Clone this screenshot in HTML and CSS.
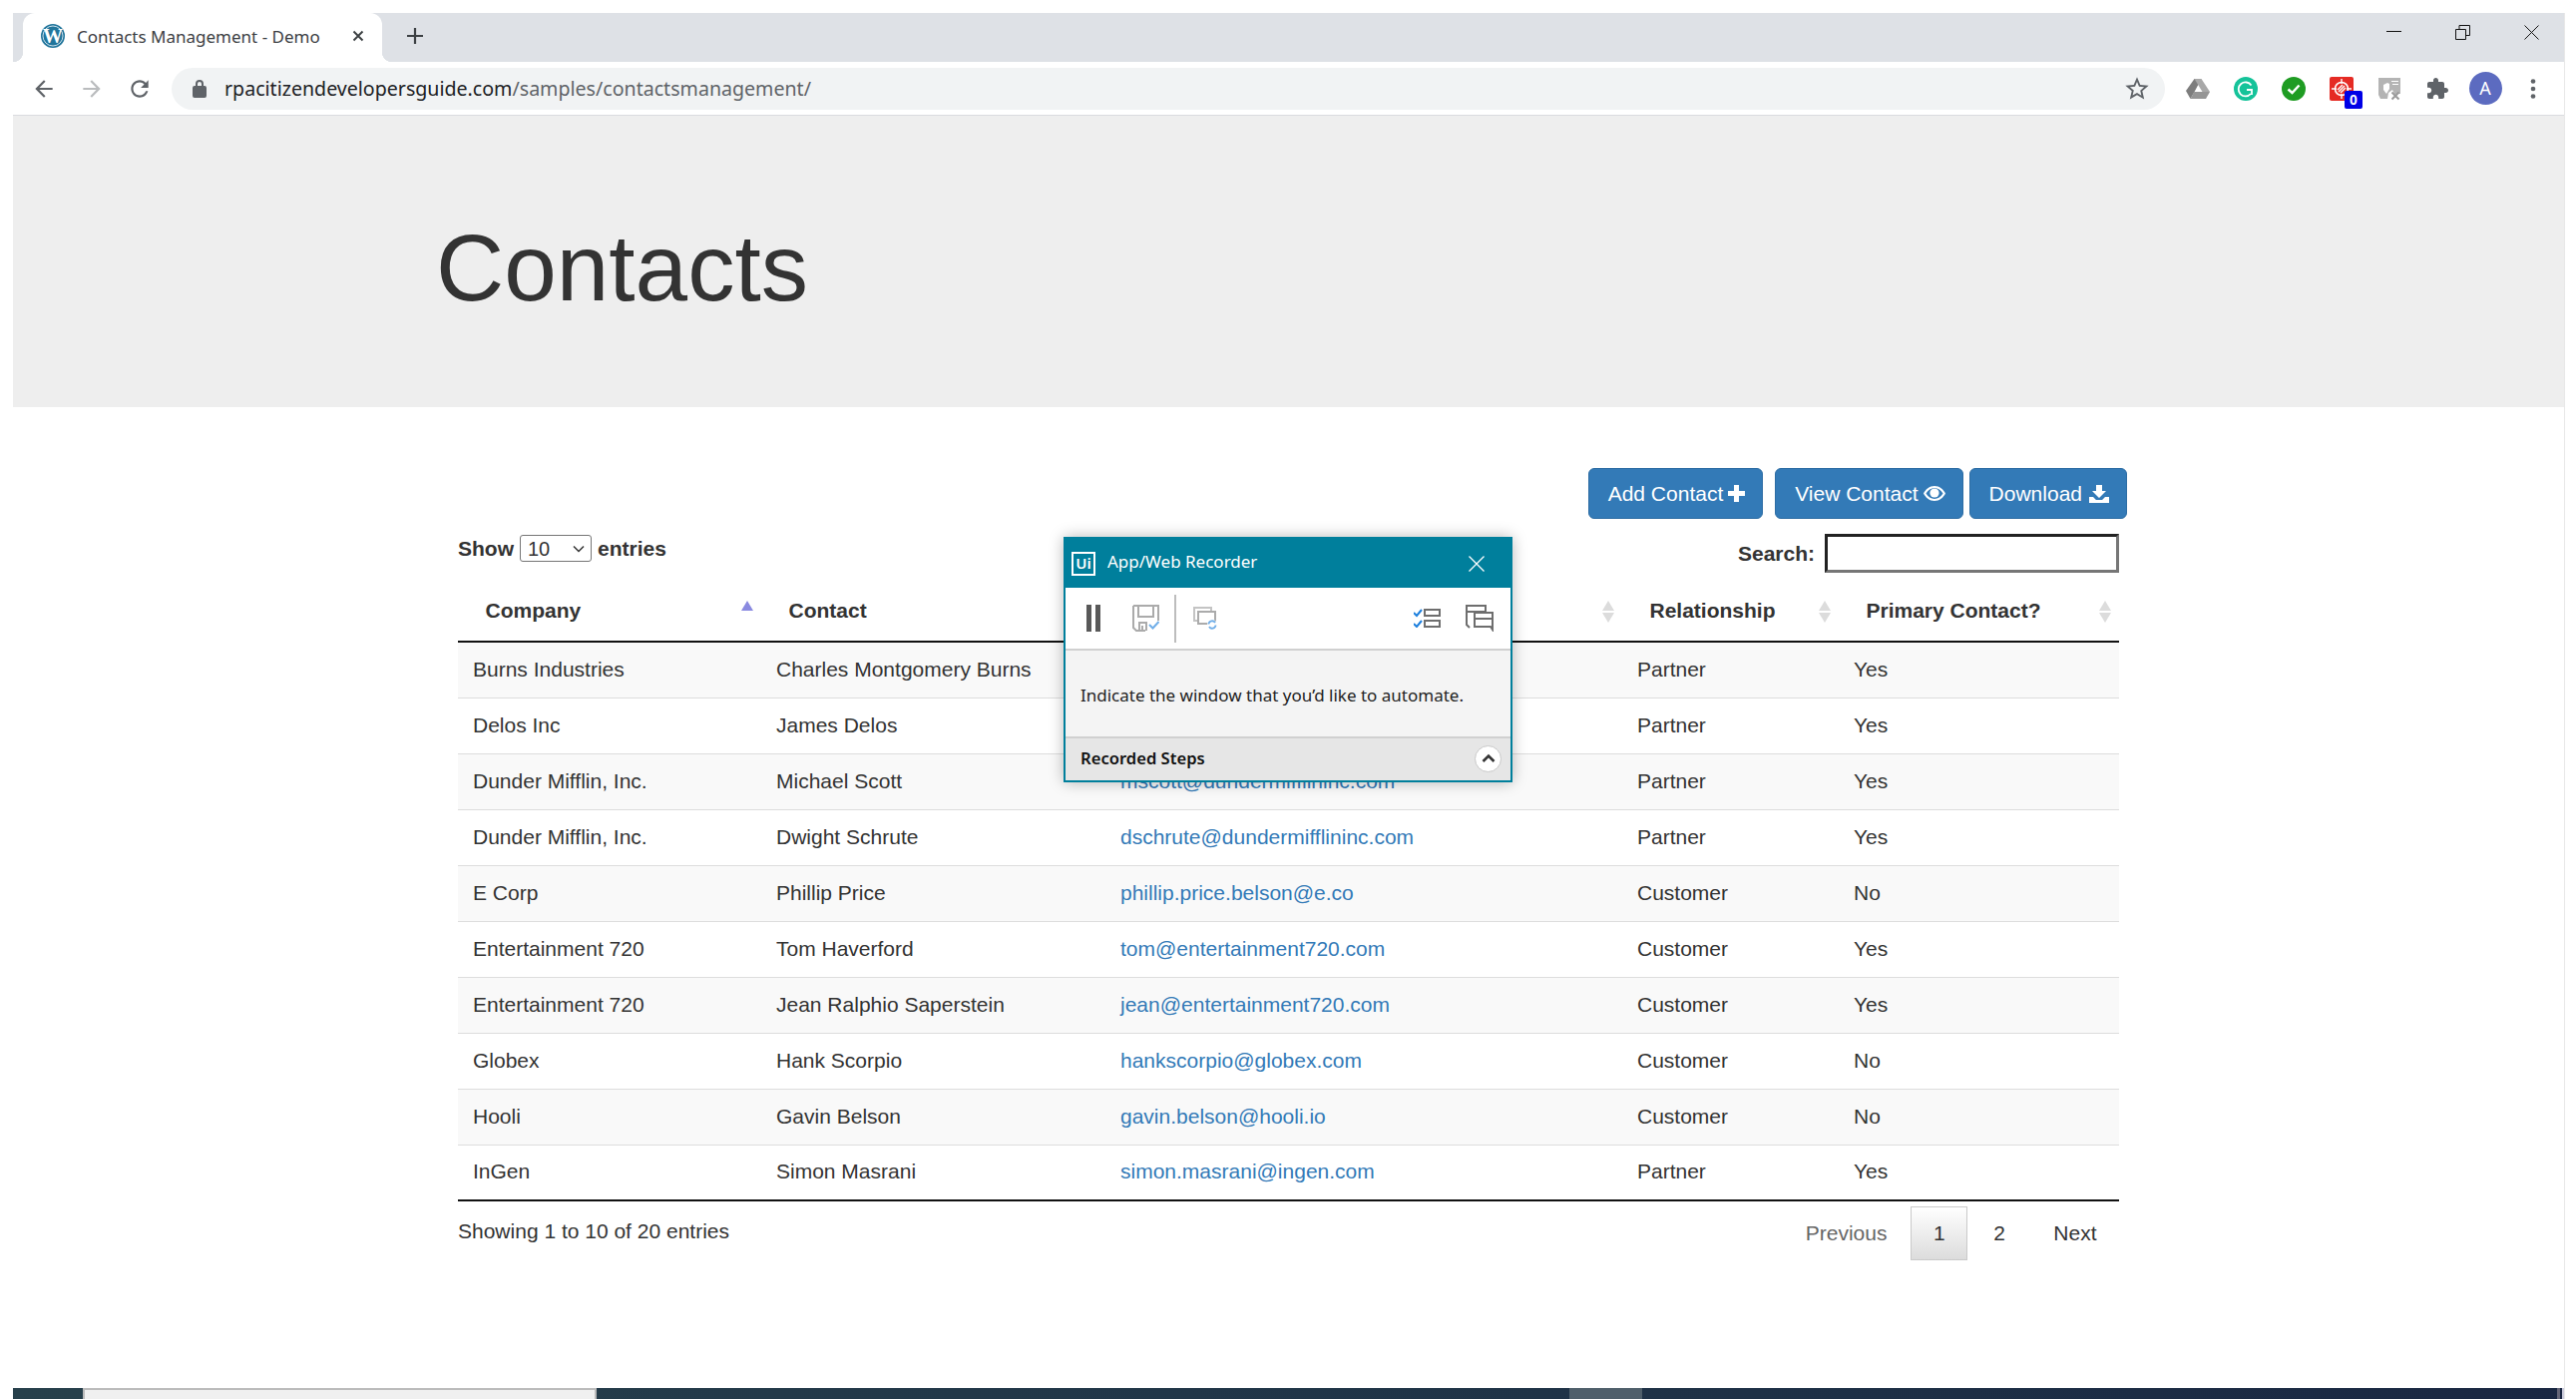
FILE: index.html
```html
<!DOCTYPE html>
<html lang="en">
<head>
    <meta charset="UTF-8">
    <title>Contacts Management - Demo</title>
    <link rel="stylesheet" href="styles.css">
</head>

<body>
    <div class="window">
        <!-- Tab strip -->
        <div class="tab-strip">
            <div class="tab">
                <svg class="favicon" viewBox="0 0 24 24">
                    <circle cx="12" cy="12" r="12" fill="#21759b"/>
                    <circle cx="12" cy="12" r="10" fill="#21759b" stroke="#cfe3ee" stroke-width="1"/>
                    <text x="12" y="18.5" text-anchor="middle" class="favicon-letter">W</text>
                </svg>
                <span class="tab-title">Contacts Management - Demo</span>
                <svg class="tab-close" viewBox="0 0 12 12"><path d="M1.5 1.5l9 9M10.5 1.5l-9 9" stroke="#3c4043" stroke-width="1.9" fill="none"/></svg>
            </div>
            <svg class="new-tab" viewBox="0 0 18 18"><path d="M9 1v16M1 9h16" stroke="#3c4043" stroke-width="2.2" fill="none"/></svg>
            <div class="win-controls">
                <svg class="win-btn" viewBox="0 0 15 15"><path d="M0 6.5h15" stroke="#111" stroke-width="1" fill="none"/></svg>
                <svg class="win-btn" viewBox="0 0 15 15"><path d="M.5 4.5h10v10H.5zM4 4.5V.5h10.500v10h-4" stroke="#111" stroke-width="1" fill="none"/></svg>
                <svg class="win-btn" viewBox="0 0 15 15"><path d="M.5.5l14 14M14.500.5l-14 14" stroke="#111" stroke-width="1" fill="none"/></svg>
            </div>
        </div>

        <!-- Address bar -->
        <div class="toolbar">
            <button class="nav-btn">
                <svg viewBox="0 0 24 24"><path fill="#5f6368" d="M20 11H7.830l5.590-5.590L12 4l-8 8 8 8 1.410-1.410L7.830 13H20v-2z"/></svg>
            </button>
            <button class="nav-btn">
                <svg viewBox="0 0 24 24"><path fill="#babcbe" d="M4 11h12.170l-5.590-5.590L12 4l8 8-8 8-1.410-1.410L16.170 13H4v-2z"/></svg>
            </button>
            <button class="nav-btn">
                <svg viewBox="0 0 24 24"><path fill="#5f6368" d="M17.650 6.350C16.200 4.900 14.210 4 12 4c-4.420 0-7.990 3.580-7.990 8s3.570 8 7.990 8c3.730 0 6.840-2.550 7.730-6h-2.080c-.82 2.330-3.040 4-5.650 4-3.310 0-6-2.690-6-6s2.690-6 6-6c1.660 0 3.140.69 4.220 1.780L13 11h7V4l-2.350 2.350z"/></svg>
            </button>
            <div class="omnibox">
                <svg class="lock" viewBox="0 0 14 18"><path fill="#5f6368" d="M12 6h-1V4a4 4 0 0 0-8 0v2H2a2 2 0 0 0-2 2v8a2 2 0 0 0 2 2h10a2 2 0 0 0 2-2V8a2 2 0 0 0-2-2zM5 6V4a2 2 0 0 1 4 0v2z"/></svg>
                <span class="url"><span class="url-host">rpacitizendevelopersguide.com</span>/samples/contactsmanagement/</span>
                <svg class="star" viewBox="0 0 24 24"><path fill="#5f6368" d="M22 9.240l-7.190-.62L12 2 9.190 8.630 2 9.240l5.460 4.730L5.820 21 12 17.270 18.180 21l-1.630-7.030L22 9.240zM12 15.400l-3.760 2.270 1-4.280-3.320-2.880 4.380-.38L12 6.100l1.710 4.040 4.380.38-3.320 2.880 1 4.280L12 15.400z"/></svg>
            </div>
            <div class="extensions">
                <div class="ext">
                    <svg viewBox="0 0 24 24">
                        <path fill="#7d7d7d" d="M8.500 2h7L8 16l-3.500 6L0 14z"/>
                        <path fill="#a8a8a8" d="M15.500 2L24 15h-7.500L8.500 2z"/>
                        <path fill="#959595" d="M4.500 22l3.800-7H24l-4 7z"/>
                    </svg>
                </div>
                <div class="ext">
                    <svg viewBox="0 0 24 24">
                        <circle cx="12" cy="12" r="12" fill="#15c39a"/>
                        <path d="M17.500 8.500A7 7 0 1 0 17 17M13 13h5v5" stroke="#fff" stroke-width="1.800" fill="none"/>
                    </svg>
                </div>
                <div class="ext">
                    <svg viewBox="0 0 24 24">
                        <circle cx="12" cy="12" r="12" fill="#1f9c23"/>
                        <path d="M6.500 12.500l4 3.500 7-7.500" stroke="#fff" stroke-width="2.400" fill="none"/>
                    </svg>
                </div>
                <div class="ext">
                    <svg viewBox="0 0 24 24">
                        <rect width="24" height="24" rx="2" fill="#e52b24"/>
                        <circle cx="12" cy="12" r="6.500" stroke="#fff" stroke-width="1.600" fill="none"/>
                        <path d="M12 2v5M12 17v5M2 12h5M17 12h5M9 15l6-6M11 16l5-5M8 13l5-5" stroke="#fff" stroke-width="1.400" fill="none"/>
                    </svg>
                    <span class="ext-badge">0</span>
                </div>
                <div class="ext">
                    <svg viewBox="0 0 24 24">
                        <path fill="#b4b4b4" d="M1 1h22v16h-6l-2-4-4 3-1 6H3L1 18z"/>
                        <path fill="#fff" d="M6 8l4-2 2 1v5l-3 5-3-4zM14 4h7v1h-7zM15 7h6v1h-6z"/>
                        <path d="M14.500 15.500l7 7M21.500 15.500l-7 7" stroke="#9a9a9a" stroke-width="2" fill="none"/>
                    </svg>
                </div>
                <div class="ext">
                    <svg viewBox="0 0 24 24"><path fill="#5f6368" d="M20.500 11H19V7c0-1.100-.9-2-2-2h-4V3.500C13 2.120 11.880 1 10.500 1S8 2.120 8 3.500V5H4c-1.100 0-1.990.9-1.990 2v3.800H3.500c1.490 0 2.700 1.210 2.700 2.700s-1.210 2.700-2.700 2.700H2V20c0 1.100.9 2 2 2h3.800v-1.500c0-1.490 1.210-2.700 2.700-2.700 1.490 0 2.700 1.210 2.700 2.700V22H17c1.100 0 2-.9 2-2v-4h1.500c1.380 0 2.500-1.120 2.500-2.500S21.880 11 20.500 11z"/></svg>
                </div>
                <div class="ext"><span class="avatar">A</span></div>
                <div class="ext">
                    <svg viewBox="0 0 24 24"><g fill="#5f6368"><circle cx="12" cy="4.500" r="2.300"/><circle cx="12" cy="12" r="2.300"/><circle cx="12" cy="19.500" r="2.300"/></g></svg>
                </div>
            </div>
        </div>

        <!-- Page -->
        <header class="hero">
            <h1>Contacts</h1>
        </header>

        <main class="content">
            <div class="actions">
                <a class="btn" href="#">Add Contact
                    <svg class="btn-icon" viewBox="0 0 17 17"><path fill="#fff" d="M6 0h5v6h6v5h-6v6H6v-6H0V6h6z"/></svg>
                </a>
                <a class="btn btn-view" href="#">View Contact
                    <svg class="btn-icon eye" viewBox="0 0 22 15">
                        <path fill="#fff" fill-rule="evenodd" d="M11 0c5 0 9 3.500 11 7.500C20 11.500 16 15 11 15S2 11.500 0 7.500C2 3.500 6 0 11 0zm0 2C7.500 2 4.500 4.300 2.500 7.500 4.500 10.700 7.500 13 11 13s6.500-2.300 8.500-5.500C17.500 4.300 14.500 2 11 2z"/>
                        <circle cx="11" cy="7" r="4.600" fill="#fff"/>
                    </svg>
                </a>
                <a class="btn" href="#">Download
                    <svg class="btn-icon dl" viewBox="0 0 20 18">
                        <path fill="#fff" d="M7 0h6v6h4l-7 7-7-7h4z"/>
                        <path fill="#fff" d="M0 12h4l3 3h6l3-3h4v6H0z"/>
                    </svg>
                </a>
            </div>

            <div class="controls">
                <label class="length">Show
                    <span class="select-box">
                        <select class="length-select"><option>10</option><option>25</option><option>50</option></select>
                        <svg class="select-arrow" viewBox="0 0 12 8"><path d="M1 1.500l5 5 5-5" stroke="#333" stroke-width="1.500" fill="none"/></svg>
                    </span>
                    entries</label>
                <label class="search">Search:
                    <input class="search-input" type="text">
                </label>
            </div>

            <table class="contacts">
                <colgroup>
                    <col class="col-company"><col class="col-contact"><col class="col-email"><col class="col-rel"><col class="col-primary">
                </colgroup>
                <thead>
                    <tr>
                        <th class="sorted">Company</th>
                        <th>Contact</th>
                        <th>Email</th>
                        <th>Relationship</th>
                        <th>Primary Contact?</th>
                    </tr>
                </thead>
                <tbody>
                    <tr><td>Burns Industries</td><td>Charles Montgomery Burns</td><td><a href="#">monty.burns@burnsindustries.com</a></td><td>Partner</td><td>Yes</td></tr>
                    <tr><td>Delos Inc</td><td>James Delos</td><td><a href="#">james@delosinc.com</a></td><td>Partner</td><td>Yes</td></tr>
                    <tr><td>Dunder Mifflin, Inc.</td><td>Michael Scott</td><td><a href="#">mscott@dundermifflininc.com</a></td><td>Partner</td><td>Yes</td></tr>
                    <tr><td>Dunder Mifflin, Inc.</td><td>Dwight Schrute</td><td><a href="#">dschrute@dundermifflininc.com</a></td><td>Partner</td><td>Yes</td></tr>
                    <tr><td>E Corp</td><td>Phillip Price</td><td><a href="#">phillip.price.belson@e.co</a></td><td>Customer</td><td>No</td></tr>
                    <tr><td>Entertainment 720</td><td>Tom Haverford</td><td><a href="#">tom@entertainment720.com</a></td><td>Customer</td><td>Yes</td></tr>
                    <tr><td>Entertainment 720</td><td>Jean Ralphio Saperstein</td><td><a href="#">jean@entertainment720.com</a></td><td>Customer</td><td>Yes</td></tr>
                    <tr><td>Globex</td><td>Hank Scorpio</td><td><a href="#">hankscorpio@globex.com</a></td><td>Customer</td><td>No</td></tr>
                    <tr><td>Hooli</td><td>Gavin Belson</td><td><a href="#">gavin.belson@hooli.io</a></td><td>Customer</td><td>No</td></tr>
                    <tr><td>InGen</td><td>Simon Masrani</td><td><a href="#">simon.masrani@ingen.com</a></td><td>Partner</td><td>Yes</td></tr>
                </tbody>
            </table>

            <div class="table-footer">
                <p class="info">Showing 1 to 10 of 20 entries</p>
                <div class="pager">
                    <a class="page-link disabled" href="#">Previous</a>
                    <a class="page-link current" href="#">1</a>
                    <a class="page-link" href="#">2</a>
                    <a class="page-link" href="#">Next</a>
                </div>
            </div>
        </main>

        <!-- Windows taskbar, mostly cut off -->
        <div class="taskbar">
            <div class="task-start"></div>
            <div class="task-search"></div>
            <div class="task-apps"></div>
            <div class="task-active"></div>
            <div class="task-rest"></div>
            <div class="task-clock">12:36 PM</div>
            <div class="task-end"></div>
        </div>
    </div>

    <!-- UiPath recorder floating over the page -->
    <div class="recorder">
        <div class="rec-title">
            <span class="rec-logo">Ui</span>
            <span class="rec-name">App/Web Recorder</span>
            <svg class="rec-close" viewBox="0 0 16 16"><path d="M.5.5l15 15M15.500.5l-15 15" stroke="#fff" stroke-width="1.300" fill="none"/></svg>
        </div>
        <div class="rec-tools">
            <svg class="tool-pause" viewBox="0 0 14 27"><path fill="#595959" d="M0 0h5v27H0zM9 0h5v27H9z"/></svg>
            <svg class="tool-save" viewBox="0 0 27 27">
                <path d="M1 1h25v15M1 1v22l3 3h9" stroke="#ababab" stroke-width="2" fill="none"/>
                <path d="M6 1v11h15V1M7 26v-8h7v8M10 26v-5" stroke="#ababab" stroke-width="2" fill="none"/>
                <path d="M17 20l3.500 3.500 6-6.500" stroke="#70aee8" stroke-width="2" fill="none"/>
            </svg>
            <span class="tool-divider"></span>
            <svg class="tool-windows" viewBox="0 0 24 23">
                <path d="M4 14H1V1h17v4" stroke="#c4c4c4" stroke-width="2" fill="none"/>
                <path d="M5 5h17v12H5z" stroke="#ababab" stroke-width="2" fill="#fff"/>
                <circle cx="19" cy="18" r="5" fill="#fff"/>
                <path d="M15.500 17.500a3.500 3.500 0 0 1 6.500-1.500M22.500 18.500a3.500 3.500 0 0 1-6.500 1.500" stroke="#70aee8" stroke-width="1.800" fill="none"/>
            </svg>
            <svg class="tool-steps" viewBox="0 0 27 19">
                <path d="M0 4l3 3 5-6M0 15l3 3 5-6" stroke="#1c7fdd" stroke-width="2" fill="none"/>
                <path d="M11 1h15v6H11zM11 12h15v6H11z" stroke="#6e6e6e" stroke-width="2" fill="none"/>
            </svg>
            <svg class="tool-chat" viewBox="0 0 28 27">
                <path d="M1 1h19v6H1zM1 7v13l3 3" stroke="#6e6e6e" stroke-width="2" fill="none"/>
                <path d="M9 8h18v6H9zM9 14v8h16l2 3V14" stroke="#6e6e6e" stroke-width="2" fill="#fff"/>
            </svg>
        </div>
        <div class="rec-message">Indicate the window that you’d like to automate.</div>
        <div class="rec-footer">
            <span class="rec-footer-label">Recorded Steps</span>
            <span class="rec-toggle">
                <svg viewBox="0 0 14 10"><path d="M1.500 8L7 2.500 12.500 8" stroke="#333" stroke-width="2.600" fill="none"/></svg>
            </span>
        </div>
    </div>
</body>
</html>
```

FILE: styles.css
```css
* {
    box-sizing: border-box;
}

html, body {
    height: 1402px;
    margin: 0;
    overflow: hidden;
}

body {
    background-color: #fff;
    color: #333;
    font-family: "Liberation Sans", Arial, sans-serif;
    font-size: 21px;
}

a {
    color: #337ab7;
    text-decoration: none;
}

.window {
    display: flex;
    flex-direction: column;
    width: 2558px;
    height: 1389px;
    margin: 13px 0 0 13px;
    border-right: 1px solid #e8e8e8;
}

/* tab strip */
.tab-strip {
    display: flex;
    align-items: center;
    flex: none;
    height: 49px;
    background-color: #dee1e6;
}

.tab {
    position: relative;
    display: flex;
    align-items: center;
    width: 360px;
    height: 49px;
    margin-left: 10px;
    padding: 0 0 3px 18px;
    background-color: #fff;
    border-radius: 12px 12px 0 0;
}

.tab::before,
.tab::after {
    content: "";
    position: absolute;
    bottom: 0;
    width: 10px;
    height: 10px;
}

.tab::before {
    left: -10px;
    background: radial-gradient(circle at 0 0, #dee1e6 10px, #fff 10.500px);
}

.tab::after {
    right: -10px;
    background: radial-gradient(circle at 100% 0, #dee1e6 10px, #fff 10.500px);
}

.favicon {
    width: 24px;
    height: 24px;
    flex: none;
}

.favicon-letter {
    fill: #fff;
    font-family: "Liberation Serif", serif;
    font-size: 20px;
    font-weight: bold;
}

.tab-title {
    margin-left: 12px;
    color: #3c4043;
    font-family: "Noto Sans", sans-serif;
    font-size: 17px;
    white-space: nowrap;
}

.tab-close {
    width: 12px;
    height: 12px;
    margin-left: auto;
    margin-right: 18px;
}

.new-tab {
    width: 18px;
    height: 18px;
    margin: 0 0 3px 24px;
}

.win-controls {
    display: flex;
    gap: 54px;
    margin-left: auto;
    margin-right: 25px;
    margin-bottom: 10px;
}

.win-btn {
    width: 15px;
    height: 15px;
}

/* address bar */
.toolbar {
    display: flex;
    align-items: center;
    flex: none;
    height: 54px;
    padding-left: 7px;
    background-color: #fff;
    border-bottom: 1px solid #dadce0;
}

.nav-btn {
    display: flex;
    align-items: center;
    justify-content: center;
    width: 48px;
    height: 42px;
    padding: 0;
    background: none;
    border: 0;
}

.nav-btn svg {
    width: 26px;
    height: 26px;
}

.omnibox {
    display: flex;
    align-items: center;
    width: 1998px;
    height: 42px;
    margin-left: 8px;
    padding: 0 14px 0 21px;
    background-color: #f1f3f4;
    border-radius: 21px;
}

.lock {
    width: 14px;
    height: 18px;
    flex: none;
}

.url {
    margin-left: 18px;
    color: #5f6368;
    font-family: "Noto Sans", sans-serif;
    font-size: 19.600px;
    white-space: nowrap;
}

.url-host {
    color: #202124;
}

.star {
    width: 28px;
    height: 28px;
    margin-left: auto;
}

.extensions {
    display: flex;
    margin-left: 9px;
}

.ext {
    position: relative;
    display: flex;
    align-items: center;
    justify-content: center;
    width: 48px;
    height: 42px;
}

.ext svg {
    width: 24px;
    height: 24px;
}

.ext-badge {
    position: absolute;
    top: 23px;
    left: 27px;
    width: 18px;
    height: 18px;
    background-color: #0000e6;
    border-radius: 2px;
    color: #fff;
    font-size: 14px;
    font-weight: bold;
    line-height: 18px;
    text-align: center;
}

.avatar {
    width: 33px;
    height: 33px;
    background-color: #5c6bc0;
    border-radius: 50%;
    color: #fff;
    font-family: "Noto Sans", sans-serif;
    font-size: 18px;
    line-height: 33px;
    text-align: center;
}

/* page */
.hero {
    display: flex;
    align-items: center;
    flex: none;
    height: 292px;
    padding: 13px 0 0 424px;
    background-color: #eee;
}

.hero h1 {
    margin: 0;
    font-size: 94.500px;
    font-weight: 400;
    line-height: 1.1;
}

.content {
    width: 1665px;
    margin: 61px 0 0 446px;
}

.actions {
    display: flex;
    justify-content: flex-end;
    gap: 6px;
    margin-right: -8px;
}

.btn {
    display: flex;
    align-items: center;
    height: 51px;
    padding: 0 17px 0 19px;
    background-color: #337ab7;
    border: 1px solid #2e6da4;
    border-radius: 6px;
    color: #fff;
    white-space: nowrap;
}

.btn-view {
    margin-left: 6px;
}

.btn-icon {
    width: 17px;
    height: 17px;
    margin-left: 5px;
}

.btn-icon.eye {
    width: 22px;
    height: 15px;
}

.btn-icon.dl {
    width: 20px;
    height: 18px;
    margin-left: 7px;
}

.controls {
    display: flex;
    justify-content: space-between;
    align-items: flex-start;
    margin-top: 15px;
}

.length,
.search {
    display: flex;
    align-items: center;
    font-weight: bold;
}

.length {
    gap: 6px;
    margin-top: 1px;
}

.select-box {
    position: relative;
    display: flex;
}

.length-select {
    width: 72px;
    height: 27px;
    padding: 0 0 0 7px;
    appearance: none;
    background-color: #fff;
    border: 1px solid #767676;
    border-radius: 3px;
    color: #333;
    font-family: "Liberation Sans", Arial, sans-serif;
    font-size: 20px;
}

.select-arrow {
    position: absolute;
    top: 10px;
    right: 7px;
    width: 12px;
    height: 8px;
    pointer-events: none;
}

.search {
    gap: 10px;
}

.search-input {
    width: 295px;
    height: 39px;
    background-color: #fff;
    border: 3px solid;
    border-color: #222 #767676 #767676 #222;
}

.contacts {
    width: 100%;
    margin-top: 9px;
    border-collapse: collapse;
    table-layout: fixed;
}

.col-company { width: 304px; }
.col-contact { width: 345px; }
.col-email { width: 518px; }
.col-rel { width: 217px; }
.col-primary { width: 281px; }

.contacts th {
    position: relative;
    height: 60px;
    padding: 0 0 1px 27.500px;
    border-bottom: 2px solid #111;
    font-weight: bold;
    text-align: left;
}

/* sort arrows */
.contacts th::before,
.contacts th::after {
    content: "";
    position: absolute;
    right: 8px;
    width: 0;
    height: 0;
    border-left: 6px solid transparent;
    border-right: 6px solid transparent;
}

.contacts th::before {
    top: 19px;
    border-bottom: 10px solid #dcdcdc;
}

.contacts th::after {
    top: 31px;
    border-top: 10px solid #dcdcdc;
}

.contacts th:last-child::before,
.contacts th:last-child::after {
    right: 8px;
}

.contacts th.sorted::before {
    border-bottom-color: #8a8ae0;
}

.contacts th.sorted::after {
    display: none;
}

.contacts td {
    height: 56px;
    padding: 0 0 1px 15px;
    border-bottom: 1px solid #ddd;
    white-space: nowrap;
}

.contacts tbody tr:nth-child(odd) {
    background-color: #f9f9f9;
}

.contacts tbody tr:last-child td {
    border-bottom: 2px solid #111;
}

.table-footer {
    display: flex;
    justify-content: space-between;
    align-items: center;
    margin-top: 5px;
}

.info {
    margin: 0 0 4px;
}

.pager {
    display: flex;
    gap: 3.500px;
}

.page-link {
    height: 54px;
    padding: 0 21.500px;
    border: 1px solid transparent;
    color: #333;
    line-height: 52px;
}

.page-link.disabled {
    color: #666;
    margin-right: -2px;
}

.page-link.current {
    background: linear-gradient(to bottom, #fff, #dcdcdc);
    border-color: #cacaca;
}

/* taskbar */
.taskbar {
    display: flex;
    flex: none;
    height: 11px;
    margin-top: auto;
    overflow: hidden;
    background: linear-gradient(to right, #27404b, #1f3347 60%, #1a2742);
}

.task-start {
    width: 70px;
}

.task-search {
    width: 515px;
    background-color: #f0f0f0;
    border-top: 2px solid #bbb;
    border-left: 2px solid #bbb;
    border-right: 2px solid #bbb;
}

.task-apps {
    width: 975px;
}

.task-active {
    width: 73px;
    background-color: #4f5f6b;
}

.task-rest {
    flex: 1;
}

.task-clock {
    width: 158px;
    padding-top: 7px;
    color: #fff;
    font-family: "Noto Sans", sans-serif;
    font-size: 16px;
    line-height: 20px;
    white-space: nowrap;
}

.task-end {
    width: 7px;
    background: linear-gradient(to right, #667 0, #667 3px, #1a2742 3px, #1a2742 5px, #ccd 5px);
}

/* recorder */
.recorder {
    position: absolute;
    top: 538px;
    left: 1066px;
    display: flex;
    flex-direction: column;
    width: 450px;
    height: 246px;
    background-color: #f4f4f4;
    border: 2px solid #007f9c;
    box-shadow: 0 0 14px rgba(0, 0, 0, 0.28);
    font-family: "Noto Sans", sans-serif;
}

.rec-title {
    display: flex;
    align-items: center;
    flex: none;
    height: 49px;
    padding: 0 26px 0 6px;
    background-color: #007f9c;
    color: #fff;
}

.rec-logo {
    width: 24px;
    height: 24px;
    border: 2px solid #fff;
    font-size: 15px;
    font-weight: 600;
    line-height: 19px;
    text-align: center;
}

.rec-name {
    margin: 0 0 5px 12px;
    font-size: 17px;
}

.rec-close {
    width: 16px;
    height: 16px;
    margin-left: auto;
}

.rec-tools {
    display: flex;
    align-items: center;
    flex: none;
    height: 63px;
    padding: 0 17px 0 21px;
    background-color: #fff;
    border-bottom: 2px solid #d0d0d0;
}

.tool-pause {
    width: 14px;
    height: 27px;
}

.tool-save {
    width: 27px;
    height: 27px;
    margin-left: 32px;
}

.tool-divider {
    width: 2px;
    height: 48px;
    margin-left: 15px;
    background-color: #bdbdbd;
}

.tool-windows {
    width: 24px;
    height: 23px;
    margin-left: 17px;
}

.tool-steps {
    width: 27px;
    height: 19px;
    margin-left: auto;
}

.tool-chat {
    width: 28px;
    height: 27px;
    margin-left: 25px;
}

.rec-message {
    display: flex;
    align-items: center;
    flex: 1;
    padding: 2px 0 0 15px;
    color: #222;
    font-size: 17px;
}

.rec-footer {
    display: flex;
    align-items: center;
    justify-content: space-between;
    flex: none;
    height: 44px;
    padding: 0 9px 2px 15px;
    background-color: #e6e6e6;
    border-top: 2px solid #d0d0d0;
    color: #111;
    font-weight: 600;
}

.rec-footer-label {
    margin-bottom: 2px;
    font-size: 16.600px;
}

.rec-toggle {
    display: flex;
    align-items: center;
    justify-content: center;
    width: 27px;
    height: 27px;
    background-color: #fff;
    border: 1px solid #c8c8c8;
    border-radius: 50%;
}

.rec-toggle svg {
    width: 14px;
    height: 10px;
}
```
